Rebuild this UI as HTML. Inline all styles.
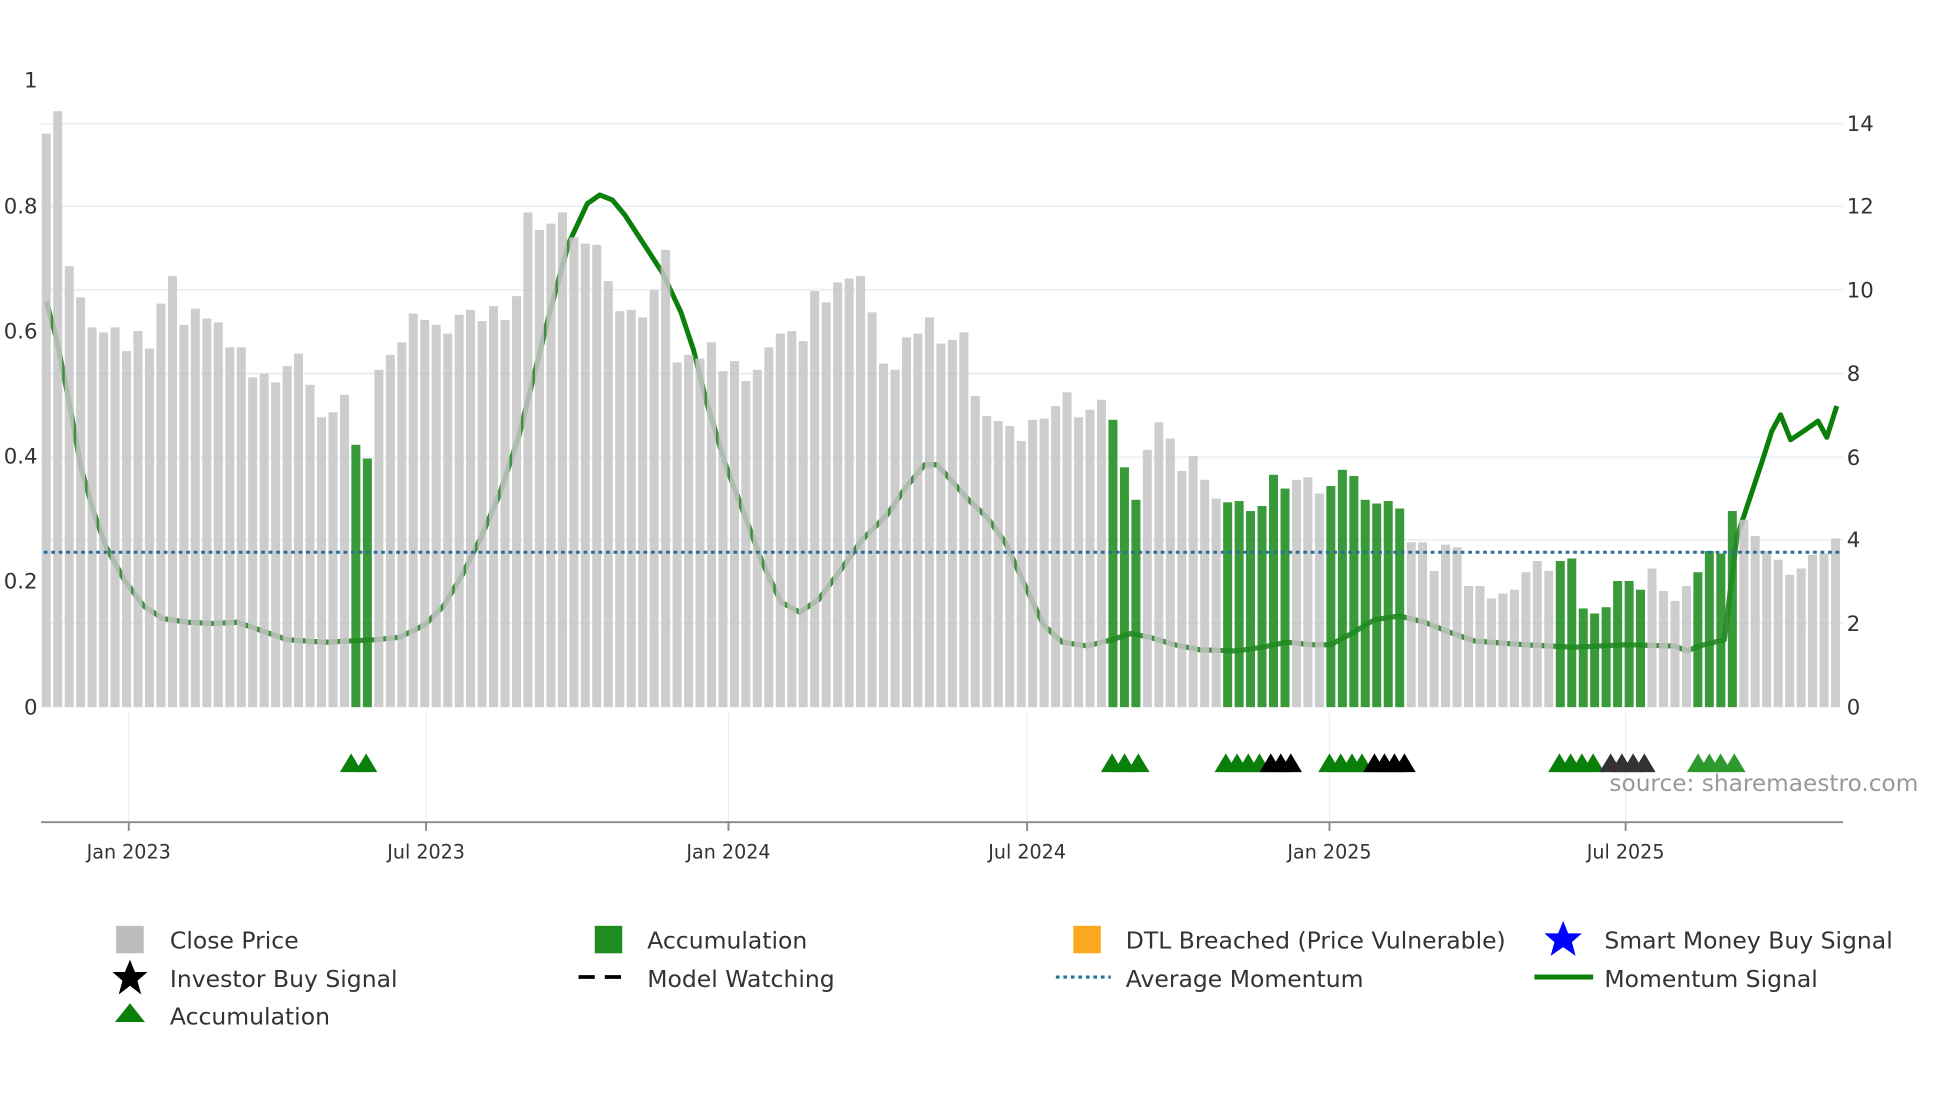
<!DOCTYPE html>
<html><head><meta charset="utf-8"><style>
html,body{margin:0;padding:0;background:#fff;}
svg{display:block;font-family:"DejaVu Sans","Liberation Sans",sans-serif;}
</style></head><body>
<svg id="s" width="1960" height="1102" viewBox="0 0 1568.6 882" preserveAspectRatio="none" xmlns="http://www.w3.org/2000/svg">
<defs><clipPath id="bc"></clipPath></defs>
<rect width="1568.6" height="882" fill="#fff"/>
<g id="grid" stroke="#eceff5" stroke-width="1.5"></g>
<g id="vgrid" stroke="#eceff5" stroke-width="1"></g>
<path id="mom" fill="none" stroke="#0a7f0a" stroke-width="4" stroke-linejoin="round"/>
<path id="mom2" fill="none" stroke="#3f8f3f" stroke-width="4" stroke-linejoin="round" clip-path="url(#bc)"/>
<g id="bars"></g>
<line x1="35" y1="442" x2="1472" y2="442" stroke="#2a6f9a" stroke-width="2.5" stroke-dasharray="3,3"/>
<g id="tri"></g>
<line x1="33" y1="658" x2="1475" y2="658" stroke="#888" stroke-width="1.5"/>
<g id="ticks" stroke="#888" stroke-width="1.5"></g>
<g font-size="17" fill="#333" text-anchor="end">
<text x="30" y="70">1</text><text x="30" y="171">0.8</text><text x="30" y="271">0.6</text>
<text x="30" y="371">0.4</text><text x="30" y="471">0.2</text><text x="30" y="572">0</text>
</g>
<g font-size="17" fill="#333">
<text x="1478" y="105">14</text><text x="1478" y="171">12</text><text x="1478" y="238">10</text>
<text x="1478" y="305">8</text><text x="1478" y="372">6</text><text x="1478" y="438">4</text>
<text x="1478" y="505">2</text><text x="1478" y="572">0</text>
</g>
<g font-size="15.3" fill="#333" text-anchor="middle">
<text x="103" y="687">Jan 2023</text><text x="341" y="687">Jul 2023</text><text x="583" y="687">Jan 2024</text>
<text x="822" y="687">Jul 2024</text><text x="1064" y="687">Jan 2025</text><text x="1301" y="687">Jul 2025</text>
</g>
<text x="1288" y="633" font-size="18.6" fill="#999">source: sharemaestro.com</text>
<g font-size="18.8" fill="#333">
<rect x="93" y="741" width="22" height="22" fill="#bdbdbd"/><text x="136" y="759">Close Price</text>
<polygon points="104,768 108,778 118,778 110,785 113,796 104,789 95,796 98,785 90,778 100,778" fill="#000"/><text x="136" y="790">Investor Buy Signal</text>
<polygon points="104,803 116,818 92,818" fill="#0a7f0a"/><text x="136" y="820">Accumulation</text>
<rect x="476" y="741" width="22" height="22" fill="#1e8c1e"/><text x="518" y="759">Accumulation</text>
<line x1="463" y1="782" x2="505" y2="782" stroke="#000" stroke-width="3" stroke-dasharray="13,8"/><text x="518" y="790">Model Watching</text>
<rect x="859" y="741" width="22" height="22" fill="#fbaa1f"/><text x="901" y="759">DTL Breached (Price Vulnerable)</text>
<line x1="845" y1="782" x2="889" y2="782" stroke="#2a6f9a" stroke-width="2.5" stroke-dasharray="3,3"/><text x="901" y="790">Average Momentum</text>
<polygon points="1251,737 1255,747 1266,747 1258,754 1261,765 1251,758 1241,765 1244,754 1236,747 1247,747" fill="#0000ff"/><text x="1284" y="759">Smart Money Buy Signal</text>
<line x1="1228" y1="782" x2="1275" y2="782" stroke="#0a7f0a" stroke-width="4"/><text x="1284" y="790">Momentum Signal</text>
</g>
<script>
var NS="http://www.w3.org/2000/svg";
function el(p,t,a){var e=document.createElementNS(NS,t);for(var k in a)e.setAttribute(k,a[k]);document.getElementById(p).appendChild(e);return e;}
[99,165,232,299,366,432,499].forEach(function(y){el("grid","line",{x1:33,x2:1475,y1:y,y2:y});});
[103,341,583,822,1064,1301].forEach(function(x){el("vgrid","line",{x1:x,x2:x,y1:570,y2:658});el("ticks","line",{x1:x,x2:x,y1:658,y2:665});});
var tops=[107,89,213,238,262,266,262,281,265,279,243,221,260,247,255,258,278,278,302,299,306,293,283,308,334,330,316,-356,-367,296,284,274,251,256,260,267,252,248,257,245,256,237,170,184,179,170,190,195,196,225,249,248,254,232,200,290,284,287,274,297,289,305,296,278,267,265,273,233,242,226,223,221,250,291,296,270,267,254,275,272,266,317,333,337,341,353,336,335,325,314,334,328,320,-336,-374,-400,360,338,351,377,365,384,399,-402,-401,-409,-405,-380,-391,384,382,395,-389,-376,-381,-400,-403,-401,-407,434,434,457,436,438,469,469,479,475,472,458,449,457,-449,-447,-487,-491,-486,-465,-465,-472,455,473,481,469,-458,-441,-443,-409,416,429,441,448,460,455,444,443,431];
var n=tops.length,step=(1469-37)/(n-1);
tops.forEach(function(t,i){var g=t<0;t=Math.abs(t);var x=37+i*step;
el("bars","rect",{x:(x-3.6).toFixed(1),y:t,width:7.2,height:566-t,fill:g?"#1e8c1e":"#c4c4c4","fill-opacity":g?0.88:0.85});
el("bc","rect",{x:(x-step/2-0.3).toFixed(1),y:t,width:(step+0.6).toFixed(2),height:566-t});});
var pts=[[37,241],[45,270],[55,320],[65,375],[75,410],[85,438],[100,465],[115,485],[130,495],[150,498],[170,499],[190,498],[210,505],[230,512],[260,514],[300,512],[320,510],[340,500],[355,485],[370,460],[385,430],[400,395],[415,350],[425,310],[440,250],[455,195],[470,163],[480,156],[490,160],[500,172],[515,195],[530,218],[545,250],[555,280],[565,320],[580,370],[595,410],[610,450],[625,482],[640,490],[655,480],[670,460],[690,432],[710,412],[725,390],[740,372],[750,372],[760,383],[775,400],[790,414],[805,435],[820,468],[835,500],[850,514],[870,517],[890,512],[905,507],[920,510],[940,516],[960,520],[990,521],[1010,518],[1030,514],[1050,516],[1065,516],[1080,508],[1100,496],[1120,493],[1140,498],[1160,506],[1180,513],[1220,516],[1260,518],[1300,516],[1340,517],[1350,521],[1360,517],[1380,512],[1390,430],[1400,400],[1410,370],[1418,345],[1425,332],[1433,352],[1445,344],[1455,337],[1462,350],[1470,325]];
var d="M"+pts.map(function(p){return p.join(",");}).join(" L");
document.getElementById("mom").setAttribute("d",d);
document.getElementById("mom2").setAttribute("d",d);
function tri(cx,c){el("tri","polygon",{points:(cx-9)+",618 "+cx+",603 "+(cx+9)+",618",fill:c});}
[281,293].forEach(function(x){tri(x,"#0a7f0a")});
[890,900,911].forEach(function(x){tri(x,"#0a7f0a")});
[981,990,999,1008].forEach(function(x){tri(x,"#0a7f0a")});[1017,1025,1033].forEach(function(x){tri(x,"#000")});
[1064,1073,1082,1090].forEach(function(x){tri(x,"#0a7f0a")});[1100,1108,1116,1124].forEach(function(x){tri(x,"#000")});
[1248,1257,1266,1275].forEach(function(x){tri(x,"#0a7f0a")});[1289,1298,1307,1316].forEach(function(x){tri(x,"#333")});
[1359,1368,1377,1388].forEach(function(x){tri(x,"#2e9a2e")});
</script>
</svg>
</body></html>
